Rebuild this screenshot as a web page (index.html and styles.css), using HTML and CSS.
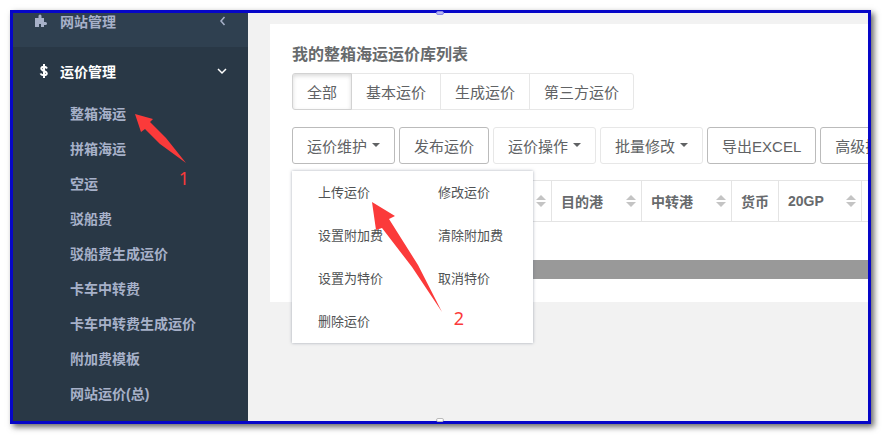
FILE: index.html
```
<!DOCTYPE html>
<html lang="zh-CN">
<head>
    <meta charset="UTF-8">
    <meta name="viewport" content="width=device-width, initial-scale=1.0">
    <title>整箱海运运价库</title>
    <link rel="stylesheet" href="styles.css">
</head>
<body>
    <div class="frame">
        <div class="app">
            <nav class="sidebar">
                <a href="#" class="menu-item">
                    <svg class="menu-icon" viewBox="0 0 14 14"><path fill="currentColor" fill-rule="evenodd" d="M1 4h3.500V2a1.500 1.500 0 0 1 3 0v2H10v4h1.500a1.300 1.300 0 1 1 0 3H10v2H7v-3H5v3H1z"/></svg>
                    <span>网站管理</span>
                    <svg class="menu-arrow" viewBox="0 0 10 10"><path d="M7.500 1 4 5l3.500 4"/></svg>
                </a>
                <div class="menu-group">
                    <a href="#" class="menu-item active">
                        <svg class="menu-icon" viewBox="0 0 14 14"><path fill="none" stroke="currentColor" stroke-width="2" d="M13 4.500C12 2.300 7.300 2 7.300 4.600S12.800 6.800 12.800 9.300 7.500 12 6.500 9.500M10 0v14"/></svg>
                        <span>运价管理</span>
                        <svg class="menu-arrow" viewBox="0 0 10 10"><path d="M1 3l4 4 4-4"/></svg>
                    </a>
                    <ul class="submenu">
                        <li><a href="#">整箱海运</a></li>
                        <li><a href="#">拼箱海运</a></li>
                        <li><a href="#">空运</a></li>
                        <li><a href="#">驳船费</a></li>
                        <li><a href="#">驳船费生成运价</a></li>
                        <li><a href="#">卡车中转费</a></li>
                        <li><a href="#">卡车中转费生成运价</a></li>
                        <li><a href="#">附加费模板</a></li>
                        <li><a href="#">网站运价(总)</a></li>
                    </ul>
                </div>
            </nav>

            <main class="content">
                <div class="card">
                    <h1 class="title">我的整箱海运运价库列表</h1>
                    <div class="tabs">
                        <button class="btn light pressed">全部</button>
                        <button class="btn light">基本运价</button>
                        <button class="btn light">生成运价</button>
                        <button class="btn light">第三方运价</button>
                    </div>
                    <div class="toolbar">
                        <div class="dropdown">
                            <button class="btn">运价维护<span class="caret"></span></button>
                            <div class="dropdown-menu">
                                <a href="#">上传运价</a>
                                <a href="#">修改运价</a>
                                <a href="#">设置附加费</a>
                                <a href="#">清除附加费</a>
                                <a href="#">设置为特价</a>
                                <a href="#">取消特价</a>
                                <a href="#">删除运价</a>
                            </div>
                        </div>
                        <button class="btn">发布运价</button>
                        <button class="btn light">运价操作<span class="caret"></span></button>
                        <button class="btn light">批量修改<span class="caret"></span></button>
                        <button class="btn">导出EXCEL</button>
                        <button class="btn">高级搜索</button>
                    </div>
                    <table class="rates">
                        <thead>
                            <tr>
                                <th class="col-first"><div class="th"><span></span><i class="sort"></i></div></th>
                                <th class="col-port"><div class="th">目的港<i class="sort"></i></div></th>
                                <th class="col-port"><div class="th">中转港<i class="sort"></i></div></th>
                                <th class="col-money"><div class="th">货币</div></th>
                                <th class="col-size"><div class="th">20GP<i class="sort"></i></div></th>
                                <th class="col-port"></th>
                            </tr>
                        </thead>
                    </table>
                    <div class="scrollbar"></div>
                </div>
            </main>
        </div>

        <i class="handle top"></i>
        <i class="handle bottom"></i>

        <div class="note note-1">
            <svg width="54" height="52" viewBox="0 0 54 52"><path d="M0 0 18 5 15 8 31 24 51 49 25 30 10 15 6 18z"/></svg>
            <span>1</span>
        </div>
        <div class="note note-2">
            <svg width="92" height="104" viewBox="0 0 92 104"><path d="M0 0 23 14 17 17 46 63 70 110 40 65 10 26 4 28z"/></svg>
            <span>2</span>
        </div>
    </div>
</body>
</html>
```
FILE: styles.css
```
* {
    box-sizing: border-box;
}
body {
    margin: 0;
    padding: 10px 11px 11px 10px;
    height: 100vh;
    background-color: #fff;
    font-family: "Liberation Sans", "Noto Sans CJK SC", sans-serif;
    color: #676a6c;
}
a {
    color: inherit;
    text-decoration: none;
}
.frame {
    position: relative;
    height: 100%;
    border: 3px solid #0606c8;
    box-shadow: 3px 3px 6px rgba(0, 0, 0, 0.6);
}
.app {
    display: flex;
    height: 100%;
    overflow: hidden;
    background-color: #f2f2f2;
}
.sidebar {
    flex: 0 0 235px;
    background-color: #2f4050;
    color: #a7b1c9;
    font-size: 14px;
    font-weight: bold;
}
.menu-item {
    display: flex;
    align-items: center;
    height: 34px;
    padding: 0 21px 18px;
}
.menu-item.active {
    height: 50px;
    padding-bottom: 2px;
    color: #fff;
}
.menu-icon {
    width: 14px;
    height: 14px;
    margin-right: 12px;
}
.menu-arrow {
    width: 10px;
    height: 10px;
    margin-left: auto;
    fill: none;
    stroke: currentColor;
    stroke-width: 1.5;
}
.menu-group {
    height: 100%;
    background-color: #293846;
}
.submenu {
    margin: 0;
    padding: 0 0 0 57px;
    list-style: none;
    line-height: 35px;
}
.content {
    flex: 1;
    min-width: 0;
    padding: 11px 0 0 22px;
}
.card {
    padding: 20px 0 23px 22px;
    background-color: #fff;
}
.title {
    margin: 0 0 8px;
    font-size: 16px;
    line-height: 21px;
}
.tabs,
.toolbar {
    display: flex;
}
.tabs {
    margin-bottom: 17px;
}
.toolbar {
    gap: 4px;
    margin-bottom: 16px;
}
.btn {
    display: flex;
    flex: none;
    align-items: center;
    height: 37px;
    padding: 0 14px 1px;
    border: 1px solid #bbb;
    border-radius: 3px;
    background-color: #fff;
    color: #606264;
    font-family: inherit;
    font-size: 15px;
    white-space: nowrap;
    cursor: pointer;
}
.btn.light {
    border-color: #e7e7e7;
}
.tabs .btn {
    border-radius: 0;
}
.tabs .btn + .btn {
    margin-left: -1px;
}
.tabs .btn:first-child {
    border-radius: 3px 0 0 3px;
}
.tabs .btn:last-child {
    border-radius: 0 3px 3px 0;
}
.tabs .pressed {
    z-index: 1;
    border-color: #d2d2d2;
    box-shadow: inset 0 2px 4px rgba(0, 0, 0, 0.15);
}
.caret {
    margin-left: 5px;
    border-top: 4px solid #606264;
    border-left: 4px solid transparent;
    border-right: 4px solid transparent;
}
.dropdown {
    position: relative;
    flex: none;
}
.dropdown-menu {
    position: absolute;
    top: 44px;
    left: 0;
    z-index: 2;
    display: grid;
    grid-template-columns: 120px 95px;
    padding-left: 26px;
    background-color: #fff;
    box-shadow: 0 0 3px rgba(86, 96, 117, 0.5);
    color: #505254;
    font-size: 13px;
    line-height: 43px;
}
.rates {
    width: 660px;
    table-layout: fixed;
    border-collapse: collapse;
    font-size: 14px;
}
.rates th {
    height: 41px;
    padding: 0 5px 0 9px;
    border: 1px solid #e4e4e4;
}
.th {
    display: flex;
    align-items: center;
    justify-content: space-between;
}
.col-first {
    width: 259px;
}
.col-port {
    width: 90px;
}
.col-money {
    width: 47px;
}
.col-size {
    width: 83px;
}
.sort::before,
.sort::after {
    content: "";
    display: block;
    border: 5px solid transparent;
}
.sort::before {
    border-top: 0;
    border-bottom-color: #c4c4c4;
    margin-bottom: 2px;
}
.sort::after {
    border-bottom: 0;
    border-top-color: #c4c4c4;
}
.scrollbar {
    height: 19px;
    margin-top: 38px;
    background-color: #999;
}
.handle {
    position: absolute;
    left: 423px;
    width: 8px;
    height: 4px;
    border: 1px solid #bbb;
    border-radius: 2px;
    background-color: #fff;
}
.handle.top {
    top: -2px;
    border-color: #8888e8;
    background-color: #b4b4f4;
}
.handle.bottom {
    bottom: -1px;
}
.note {
    position: absolute;
    z-index: 3;
    display: flex;
    flex-direction: column;
    color: #fb3a3a;
    font-family: "Noto Sans", sans-serif;
    font-size: 18px;
    line-height: 24px;
    pointer-events: none;
}
.note svg {
    overflow: visible;
    fill: #fb3a3a;
}
.note span {
    align-self: flex-end;
}
.note-1 {
    top: 101px;
    left: 122px;
}
.note-2 {
    top: 189px;
    left: 359px;
}
```
